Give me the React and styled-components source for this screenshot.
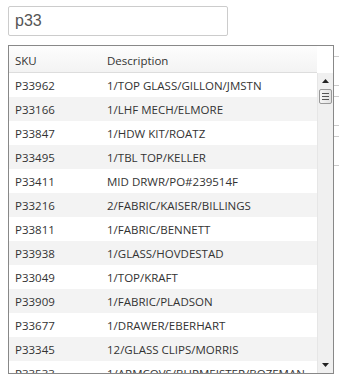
import React from "react";
import styled, { createGlobalStyle } from "styled-components";

const rows = [
  ["P33962", "1/TOP GLASS/GILLON/JMSTN"],
  ["P33166", "1/LHF MECH/ELMORE"],
  ["P33847", "1/HDW KIT/ROATZ"],
  ["P33495", "1/TBL TOP/KELLER"],
  ["P33411", "MID DRWR/PO#239514F"],
  ["P33216", "2/FABRIC/KAISER/BILLINGS"],
  ["P33811", "1/FABRIC/BENNETT"],
  ["P33938", "1/GLASS/HOVDESTAD"],
  ["P33049", "1/TOP/KRAFT"],
  ["P33909", "1/FABRIC/PLADSON"],
  ["P33677", "1/DRAWER/EBERHART"],
  ["P33345", "12/GLASS CLIPS/MORRIS"],
  ["P33533", "1/ARMCOVS/BURMEISTER/BOZEMAN"],
];

// lines of the table that sits behind the popup (offsets from its top)
const behindLines = [11, 40, 51, 80, 91, 120];

function App() {
  return (
    <Page>
      <Global />
      <Search defaultValue="p33" />
      <Behind>
        {behindLines.map((y) => (
          <BehindLine key={y} style={{ top: y }} />
        ))}
        <Popup>
          <Header>
            <HeadCell $w={92}>SKU</HeadCell>
            <HeadCell>Description</HeadCell>
          </Header>
          <HeadGap />
          <List>
            {rows.map(([sku, desc], i) => (
              <Row key={sku} $alt={i % 2 === 1}>
                <Cell $w={92}>{sku}</Cell>
                <Cell>{desc}</Cell>
              </Row>
            ))}
          </List>
          <Scrollbar>
            <Arrow viewBox="0 0 7 4">
              <path d="M0 4 L3.5 0 L7 4 Z" fill="#222" />
            </Arrow>
            <Thumb>
              <Grip />
              <Grip />
              <Grip />
            </Thumb>
            <Track />
            <Arrow viewBox="0 0 7 4">
              <path d="M0 0 L3.5 4 L7 0 Z" fill="#222" />
            </Arrow>
          </Scrollbar>
        </Popup>
      </Behind>
    </Page>
  );
}

const Global = createGlobalStyle`
  body {
    margin: 0;
    background: #fff;
    font-family: "Open Sans", "Noto Sans", sans-serif;
  }
`;

const Page = styled.div`
  padding: 6px 0 0 8px;
`;

const Search = styled.input`
  display: block;
  box-sizing: border-box;
  width: 220px;
  height: 30px;
  border: 1px solid #ccc;
  border-radius: 2px;
  padding: 0 6px;
  font-family: "Liberation Sans", Arial, sans-serif;
  font-size: 16px;
  color: #555;
  outline: none;
`;

const Behind = styled.div`
  position: relative;
  margin-top: 9px;
`;

const BehindLine = styled.div`
  position: absolute;
  left: 325px;
  width: 8px;
  height: 1px;
  background: #ccc;
`;

const Popup = styled.div`
  position: relative;
  box-sizing: border-box;
  width: 326px;
  height: 329px;
  border: 1px solid #888;
  background: #fff;
  display: grid;
  grid-template-columns: 1fr 16px;
  grid-template-rows: 27px 1fr;
  overflow: hidden;
`;

const Header = styled.div`
  display: flex;
  align-items: center;
  padding-top: 3px;
  box-sizing: border-box;
  border-bottom: 1px solid #ddd;
  background: linear-gradient(#fdfdfd, #f3f3f3);
`;

const HeadGap = styled.div`
  background: #fff;
`;

const HeadCell = styled.div`
  box-sizing: border-box;
  padding-left: 6px;
  width: ${(p) => (p.$w ? p.$w + "px" : "auto")};
  font-size: 11.5px;
  color: #333;
`;

const List = styled.div`
  overflow: hidden;
`;

const Row = styled.div`
  display: flex;
  align-items: center;
  height: 24px;
  background: ${(p) => (p.$alt ? "#f3f3f3" : "#fff")};
`;

const Cell = styled.div`
  box-sizing: border-box;
  padding-left: 6px;
  width: ${(p) => (p.$w ? p.$w + "px" : "auto")};
  white-space: nowrap;
  font-size: 11.5px;
  color: #333;
`;

const Scrollbar = styled.div`
  display: flex;
  flex-direction: column;
  align-items: center;
  background: #f0f0f0;
  border-left: 1px solid #e6e6e6;
`;

const Arrow = styled.svg`
  width: 7px;
  height: 4px;
  margin: 6px 0;
`;

const Thumb = styled.div`
  box-sizing: border-box;
  width: 13px;
  height: 15px;
  border: 1px solid #999;
  border-radius: 2px;
  background: linear-gradient(90deg, #f6f6f6, #e2e2e2);
  display: flex;
  flex-direction: column;
  justify-content: center;
  align-items: center;
  gap: 2px;
`;

const Grip = styled.div`
  width: 7px;
  height: 1px;
  background: #555;
`;

const Track = styled.div`
  flex: 1;
`;

export default App;
